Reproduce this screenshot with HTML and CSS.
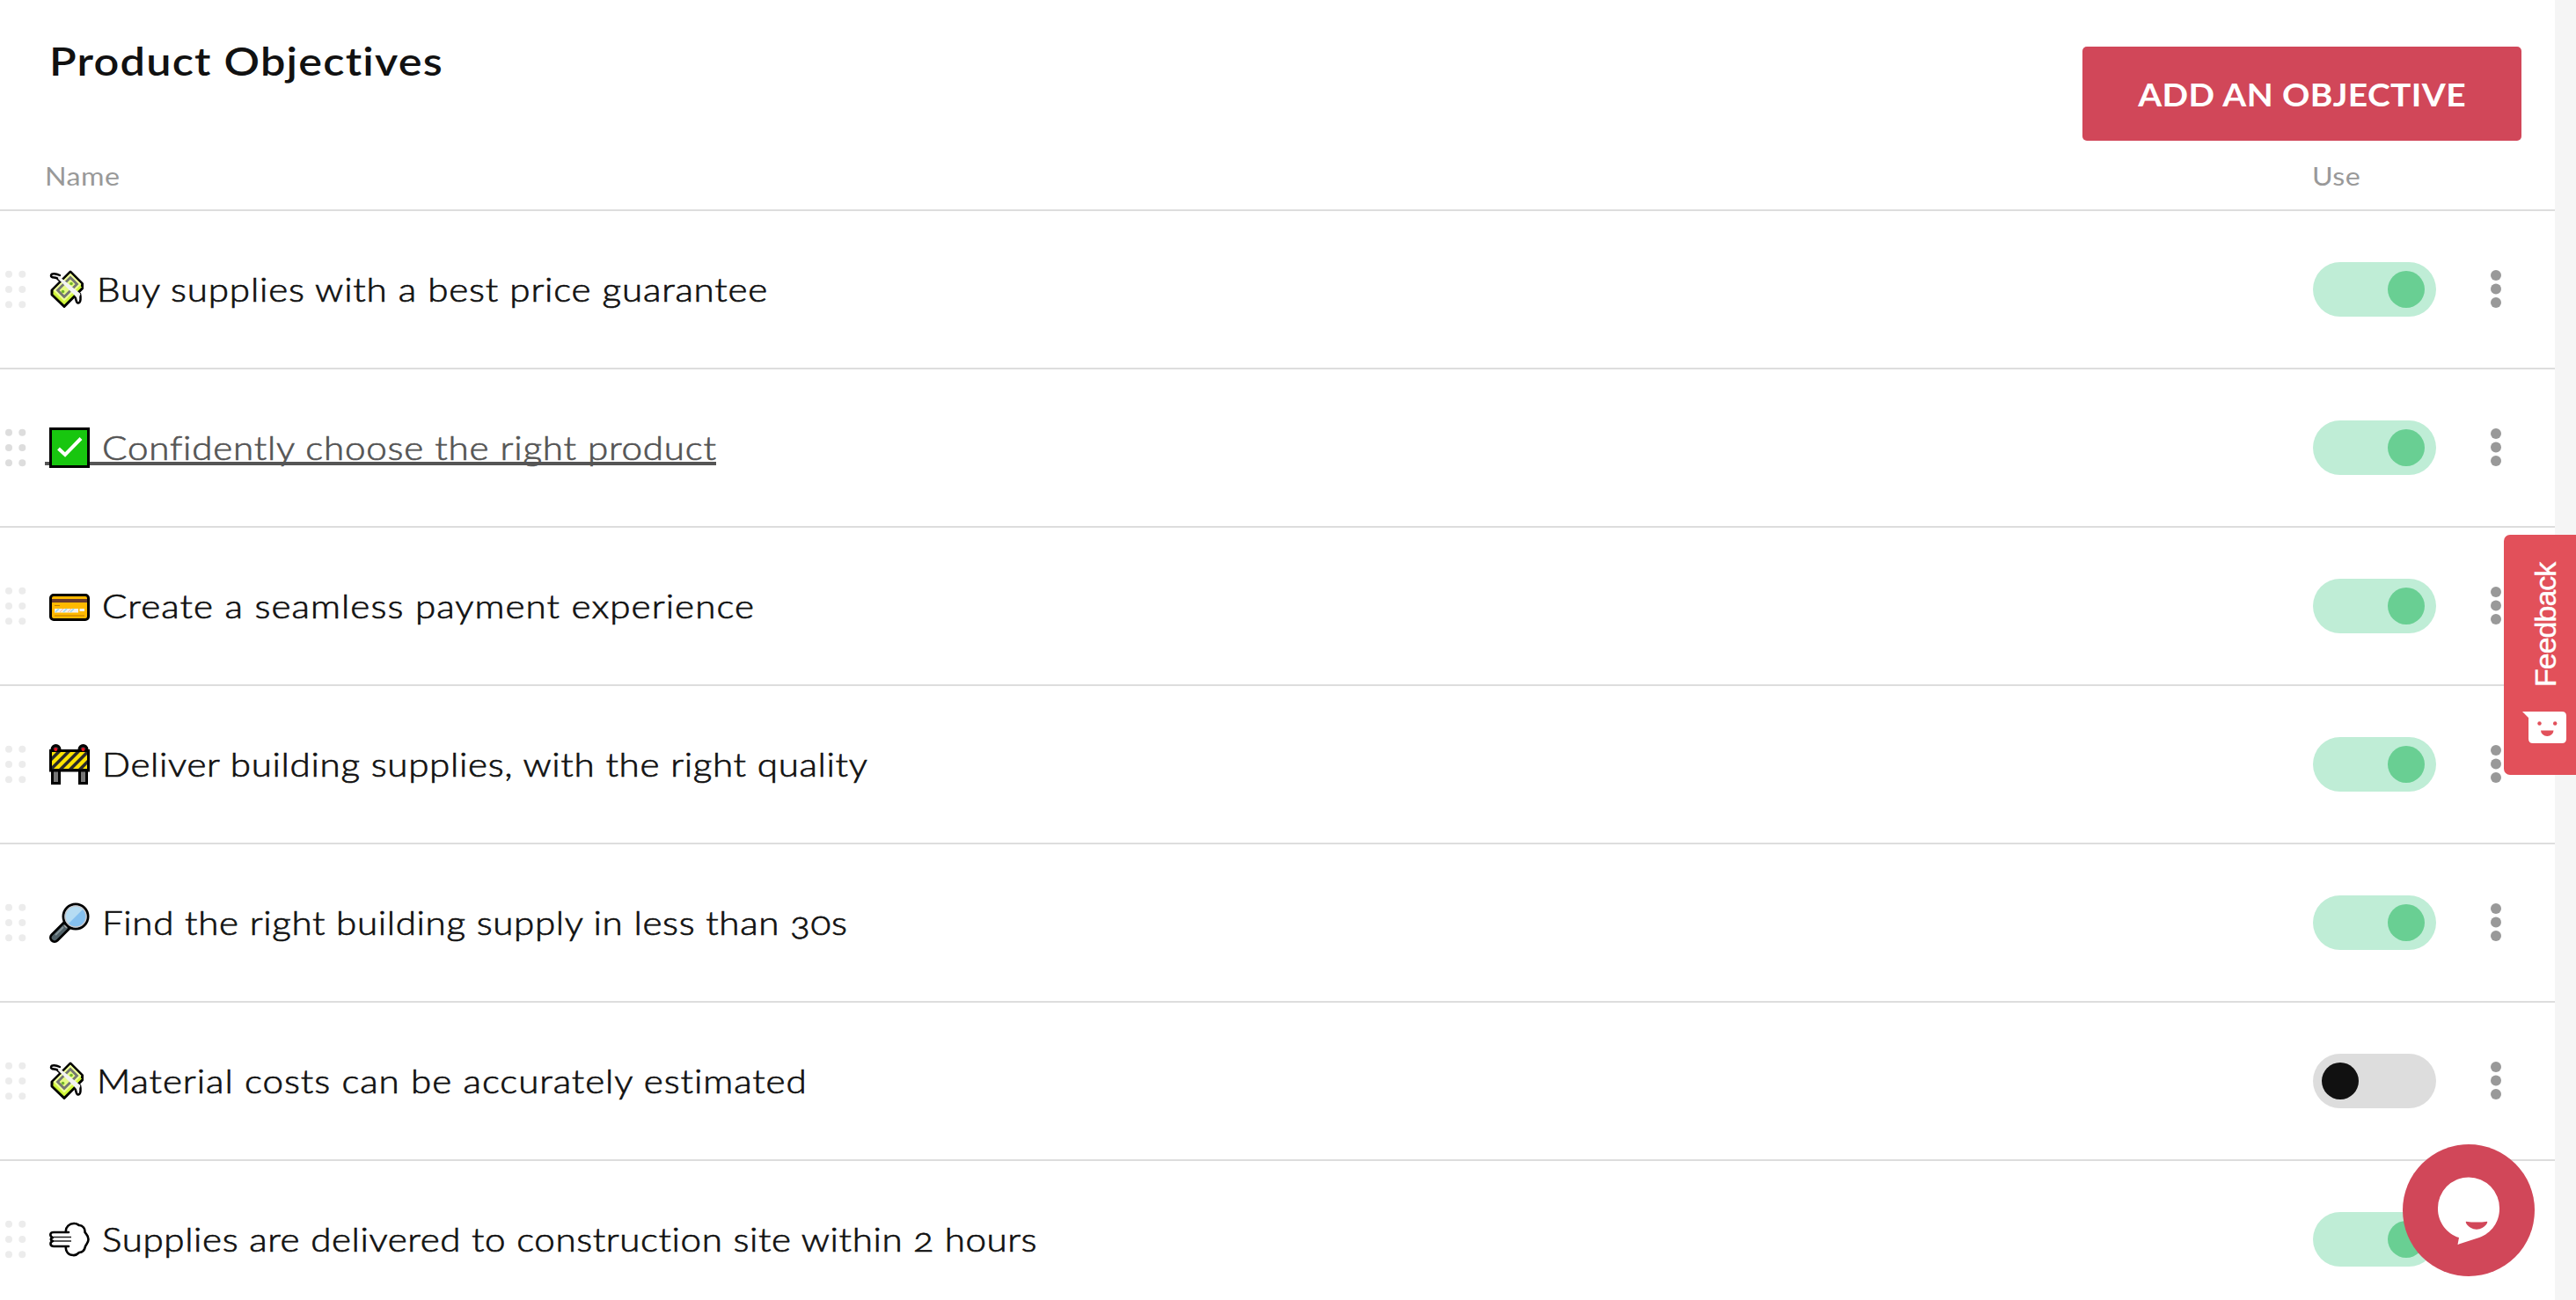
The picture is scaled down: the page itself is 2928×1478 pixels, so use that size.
FILE: index.html
```html
<!DOCTYPE html>
<html lang="en">
<head>
<meta charset="utf-8">
<title>Product Objectives</title>
<link rel="stylesheet" href="styles.css">
</head>
<body>
<svg class="sprite" aria-hidden="true">
  <symbol id="grip" viewBox="0 0 24 44"><circle cx="4" cy="4.700" r="4"/><circle cx="19.300" cy="4.700" r="4"/><circle cx="4" cy="22" r="4"/><circle cx="19.300" cy="22" r="4"/><circle cx="4" cy="39.300" r="4"/><circle cx="19.300" cy="39.300" r="4"/></symbol>
  <symbol id="kebab" viewBox="0 0 12 44"><circle cx="6" cy="6" r="6"/><circle cx="6" cy="21.500" r="6"/><circle cx="6" cy="37" r="6"/></symbol>
  <symbol id="money" viewBox="0 0 40 46">
    <path d="M24 3 37.500 16.500V22L17 42.500 3 29V24Z" fill="#d3f53c" stroke="#000" stroke-width="3" stroke-linejoin="round"/>
    <path d="M24 4.500 36.500 17 17 36.500 4.500 24Z" fill="#eeff98"/>
    <path d="M4.500 28 17 40 37 20" fill="none" stroke="#a9d92b"/>
    <path d="M24 9.500 31.500 17 17 31.500 9.500 24Z" fill="#e5fb84" stroke="#747672" stroke-width="2.800"/>
    <circle cx="15.500" cy="25.500" r="1.800" fill="#72b52b"/><circle cx="25" cy="16.500" r="1.800" fill="#72b52b"/>
    <path d="M12 7C8 5 2 4 2 7.500 2 11 8 8 10 11.500L13 14M35 28C36 32 36 38 33 38.500 30 39 31 34 29 31" fill="#f2f2f2" stroke="#000" stroke-width="2.500" stroke-linecap="round" stroke-linejoin="round"/>
    <path d="M11 8 35.500 28 33 34 28 29 10 11Z" fill="#f2f2f2"/>
  </symbol>
  <symbol id="check" viewBox="0 0 46 46"><path d="M1.500 1.500H44.500V44.500H1.500Z" fill="#18c60f" stroke="#000" stroke-width="3"/><path d="M10.500 24 18 31 36 12.500" fill="none" stroke="#fff" stroke-width="4"/></symbol>
  <symbol id="card" viewBox="0 0 46 46"><rect x="1.500" y="10.500" width="43" height="28" rx="3.500" fill="#ffb900" stroke="#000" stroke-width="3"/><path d="M3 15H43V19H3Z" fill="#693b2d"/><path d="M6 26H33V30.500H6Z" fill="#f2f2f2"/><path d="m7 30 4-4m5 4 4-4m4 4 4-4" stroke="#9bd8ee" stroke-width="1.500"/><path d="m12 30 4-4m5 4 4-4" stroke="#f5b8a8" stroke-width="1"/><path d="M34.500 26H40V29H34.500Z" fill="#f2f2f2"/><path d="M6 22.500H12M6 34H40" stroke="#b97a09" stroke-width="1.200"/></symbol>
  <symbol id="barrier" viewBox="0 0 46 46">
    <path d="M3.500 30V44.500H11.500V30M34.500 30V44.500H42.500V30" fill="#767676" stroke="#000" stroke-width="3"/>
    <path d="M3 9V6a4 4 0 0 1 9 0V9M34 9V6a4 4 0 0 1 9 0V9" fill="#2b2b2b" stroke="#000" stroke-width="3"/>
    <path d="M1.500 7.500H44.500V30H1.500Z" fill="#292929" stroke="#000" stroke-width="3"/>
    <circle cx="7.300" cy="6" r="2" fill="#e81224"/><circle cx="38.500" cy="6" r="2" fill="#e81224"/>
    <path d="M3 9H8L3 14ZM13 9H19L3 25V19ZM24 9H30L11 28H5ZM35 9H41L22 28H16ZM43 18V12L27 28H33ZM43 23V28H38Z" fill="#ffe300"/>
  </symbol>
  <symbol id="search" viewBox="0 0 46 46"><path d="M21 25 6 40" stroke="#000" stroke-width="12" stroke-linecap="round"/><path d="M18 28 6 40" stroke="#506067" stroke-width="6.500" stroke-linecap="round"/><path d="M16 28 7 37" stroke="#849399" stroke-width="2"/><path d="m22 24-4 4" stroke="#b4b4b4" stroke-width="3.500"/><circle cx="30" cy="16" r="14" fill="#85c0ef" stroke="#000" stroke-width="3"/><path d="M21.500 24.500A12 12 0 0 1 38.500 7.500Z" fill="#b5dcf3"/><circle cx="30" cy="16" r="12" fill="none" stroke="#c8c8cb" stroke-width="1.500"/></symbol>
  <symbol id="gust" viewBox="0 0 46 46"><path d="M22 15H5C0 15 .5 20 4 21 1 22 1 24 4 25 .5 26 .5 31 5 31H22M19 15C18 9 23 4.500 29 5 32 5 33 7 34 7 38 7 41 11 40.500 15 42 17 44.500 19 44.500 23 44.500 27 42 28 41 31 40 36 37 38 34 38 32 40 30 41.500 27 41 22 41 18 37 19 31" fill="none" stroke="#000" stroke-width="2.600" stroke-linecap="round" stroke-linejoin="round"/><path d="M5 20.500H25M5 25H25" stroke="#222" stroke-width="1.700"/></symbol>
</svg>

<main class="panel">
  <header class="header">
    <h1 class="title">Product Objectives</h1>
    <button class="add"><span class="add-text">ADD AN OBJECTIVE</span></button>
  </header>
  <div class="columns"><span class="col-name">Name</span><span class="col-use">Use</span></div>
  <ul class="list">
    <li class="row"><svg class="grip"><use href="#grip"/></svg><a class="name"><svg class="emoji narrow"><use href="#money"/></svg><span class="label t1">Buy supplies with a best price guarantee</span></a><span class="toggle on"></span><svg class="kebab"><use href="#kebab"/></svg></li>
    <li class="row active"><svg class="grip"><use href="#grip"/></svg><a class="name"><svg class="emoji"><use href="#check"/></svg><span class="label t2">Confidently choose the right product</span></a><span class="toggle on"></span><svg class="kebab"><use href="#kebab"/></svg></li>
    <li class="row"><svg class="grip"><use href="#grip"/></svg><a class="name"><svg class="emoji"><use href="#card"/></svg><span class="label t3">Create a seamless payment experience</span></a><span class="toggle on"></span><svg class="kebab"><use href="#kebab"/></svg></li>
    <li class="row"><svg class="grip"><use href="#grip"/></svg><a class="name"><svg class="emoji"><use href="#barrier"/></svg><span class="label t4">Deliver building supplies, with the right quality</span></a><span class="toggle on"></span><svg class="kebab"><use href="#kebab"/></svg></li>
    <li class="row"><svg class="grip"><use href="#grip"/></svg><a class="name"><svg class="emoji"><use href="#search"/></svg><span class="label t5">Find the right building supply in less than 30s</span></a><span class="toggle on"></span><svg class="kebab"><use href="#kebab"/></svg></li>
    <li class="row"><svg class="grip"><use href="#grip"/></svg><a class="name"><svg class="emoji narrow"><use href="#money"/></svg><span class="label t6">Material costs can be accurately estimated</span></a><span class="toggle"></span><svg class="kebab"><use href="#kebab"/></svg></li>
    <li class="row"><svg class="grip"><use href="#grip"/></svg><a class="name"><svg class="emoji"><use href="#gust"/></svg><span class="label t7">Supplies are delivered to construction site within 2 hours</span></a><span class="toggle on"></span><svg class="kebab"><use href="#kebab"/></svg></li>
  </ul>
</main>

<aside class="feedback">
  <span class="feedback-text">Feedback</span>
  <svg class="smile" viewBox="0 0 50 36"><path d="M0 0H45Q50 0 50 5V31Q50 36 45 36H12Q7 36 7 31V7Z" fill="#fff"/><circle cx="19.500" cy="13.500" r="2.200" fill="#e2505a"/><circle cx="37.200" cy="13.500" r="2.200" fill="#e2505a"/><path d="M21 21.500H35.500A7.250 6.500 0 0 1 21 21.500Z" fill="#e2505a"/></svg>
</aside>
<div class="chat"><svg class="chat-icon" viewBox="0 0 150 150"><path d="M75 37.500A35 35 0 0 0 40 73.500C40 88 50 102 64 106L62.500 114 87 106C101 101 110 88 110 73.500A35 35 0 0 0 75 37.500Z" fill="#fff"/><path d="M72 87.700Q84 89.500 96 87.700Q96.500 88 96 89.500C91 99 77 99 72 89.500Q71.500 88 72 87.700Z" fill="#d14759"/></svg></div>
</body>
</html>
```
FILE: styles.css
```css
* { box-sizing: border-box; }
body {
  margin: 0;
  height: 1478px;
  overflow: hidden;
  background: #f5f5f5;
  color: #111;
  font-family: Lato, sans-serif;
  font-variant-numeric: oldstyle-nums;
}
.sprite { display: none; }
.panel { width: 2904px; height: 1478px; background: #fff; overflow: hidden; }

.header {
  display: flex;
  justify-content: space-between;
  align-items: flex-start;
  height: 160px;
  padding: 39px 38px 0 56px;
}
.title {
  margin: 0;
  font-size: 45px;
  line-height: 60px;
  font-weight: 600;
  letter-spacing: 1.1px;
  transform: scaleX(1.12);
  transform-origin: left;
}
.add {
  width: 499px;
  height: 107px;
  margin-top: 14px;
  padding: 0;
  border: 0;
  border-radius: 5px;
  background: #d14759;
  color: #fff;
  font: 700 36px Lato, sans-serif;
  letter-spacing: 0.4px;
}
.add-text { display: inline-block; transform: scaleX(1.08); }
.columns {
  display: flex;
  justify-content: space-between;
  height: 80px;
  padding: 20px 0 0 51px;
  border-bottom: 2px solid #ddd;
  color: #999;
  font-size: 28px;
  line-height: 40px;
  letter-spacing: 0.4px;
}
.col-name, .col-use { transform: scaleX(1.15); transform-origin: left; }
.col-use { width: 276px; }

.list { margin: 0; padding: 0; list-style: none; }
.row {
  display: flex;
  align-items: center;
  height: 180px;
  border-bottom: 2px solid #ddd;
}
.grip { width: 24px; height: 44px; margin-left: 6px; fill: #ececec; }
.name {
  display: flex;
  align-items: center;
  flex: 1;
  margin-left: 26px;
  font-size: 37px;
  line-height: 48px;
}
.emoji { width: 46px; height: 46px; flex: none; }
.narrow { width: 40px; }
.label {
  margin-left: 14px;
  white-space: pre;
  font-weight: 300;
  -webkit-text-stroke: 0.7px currentColor;
  transform: scaleX(1.14);
  transform-origin: left;
}
.toggle {
  display: flex;
  align-items: center;
  width: 140px;
  height: 62px;
  padding: 0 10px;
  border-radius: 31px;
  background: #ddd;
}
.toggle::before { content: ""; width: 42px; height: 42px; border-radius: 50%; background: #111; }
.toggle.on { justify-content: flex-end; padding-right: 13px; background: #bfedd6; }
.toggle.on::before { background: #69cf93; }
.kebab { width: 12px; height: 44px; margin: 0 61px 0 62px; fill: #999; }

.active .grip { fill: #ddd; }
.active .name {
  flex: none;
  width: 763px;
  margin: 0 1815px 0 21px;
  padding-left: 5px;
  color: #555;
  background: linear-gradient(#555, #555) 0 40px / 100% 4px no-repeat;
}

.t1 { letter-spacing: 0.7px; }
.t2 { letter-spacing: 0.69px; }
.t3 { letter-spacing: 0.93px; }
.t4 { letter-spacing: 0.58px; }
.t5 { letter-spacing: 0.55px; }
.t6 { letter-spacing: 0.82px; }
.t7 { letter-spacing: 0.52px; }

.feedback {
  position: absolute;
  top: 608px;
  right: 0;
  display: flex;
  flex-direction: column;
  align-items: center;
  width: 82px;
  height: 273px;
  padding: 29px 0 0 12px;
  border-radius: 7px 0 0 7px;
  background: #e2505a;
}
.feedback-text {
  height: 144px;
  writing-mode: vertical-rl;
  transform: rotate(180deg);
  color: #fff;
  font: 34px/40px "Liberation Sans", sans-serif;
  letter-spacing: -1px;
  -webkit-text-stroke: 0.4px #fff;
}
.smile { width: 50px; height: 36px; margin: 28px 2px 0 0; }
.chat {
  position: absolute;
  top: 1301px;
  left: 2731px;
  width: 150px;
  height: 150px;
  border-radius: 50%;
  background: #d14759;
}
.chat-icon { display: block; width: 150px; height: 150px; }
```
